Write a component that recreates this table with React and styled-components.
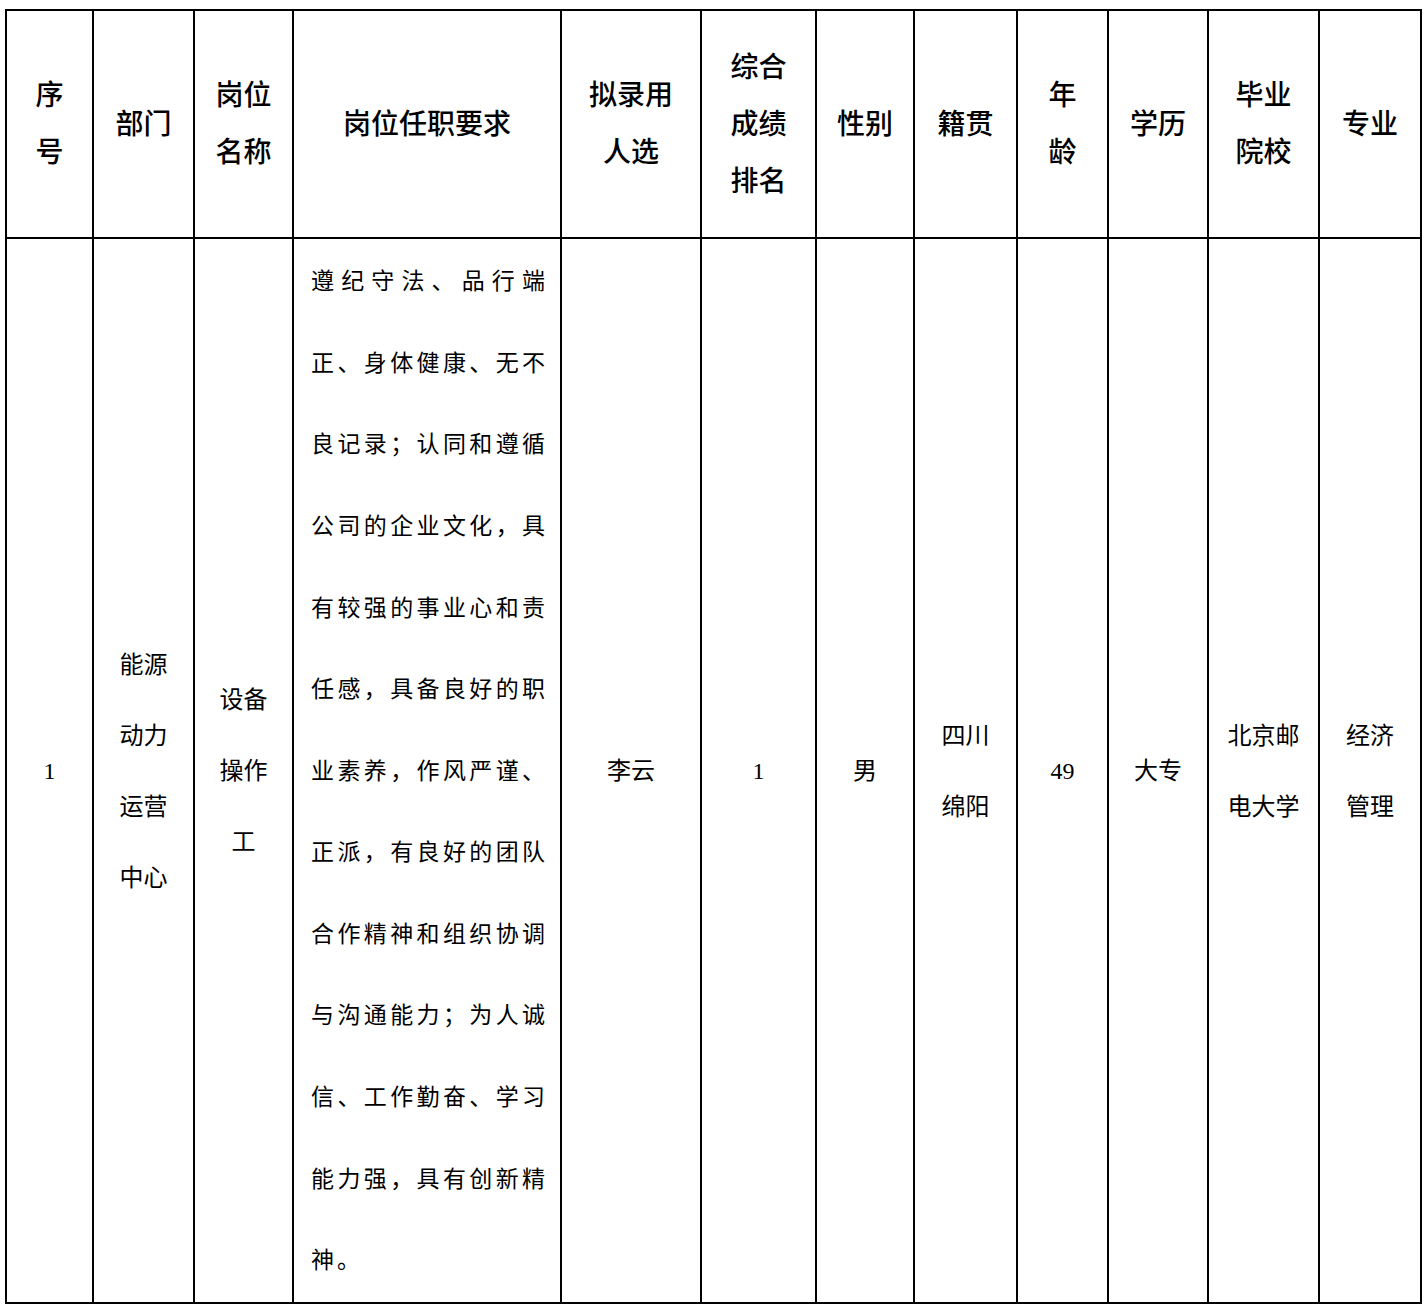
import React from "react";
import styled, { createGlobalStyle } from "styled-components";

const Global = createGlobalStyle`
  *, *::before, *::after { box-sizing: border-box; }
  html, body { margin: 0; padding: 0; background: #ffffff; }
  body {
    font-family: "Liberation Serif", "Noto Sans CJK SC", serif;
    color: #000000;
  }
`;

const Table = styled.table`
  margin: 9px 0 0 5px;
  border-collapse: separate;
  border-spacing: 0;
  table-layout: fixed;
  width: 1417px;
  border-top: 2px solid #000;
  border-left: 2px solid #000;
`;

const HeadCell = styled.th`
  width: ${(p) => p.$w}px;
  height: 228px;
  padding: 0;
  border-right: 2px solid #000;
  border-bottom: 2px solid #000;
  text-align: center;
  vertical-align: middle;
  font-size: 28px;
  font-weight: 500;
  line-height: 57px;
`;

const BodyCell = styled.td`
  height: 1065px;
  padding: 2px 0 0;
  border-right: 2px solid #000;
  border-bottom: 2px solid #000;
  text-align: center;
  vertical-align: middle;
  font-size: 24px;
  font-weight: 400;
  line-height: 71px;
`;

const Line = styled.span`
  display: block;
  white-space: nowrap;
  color: ${(p) => p.$color || "#000"};
`;

const Requirements = styled.div`
  padding: 0 15px 0 17px;
  text-align: left;
  font-size: 23px;
  line-height: 81.6px;
`;

const ReqLine = styled.span`
  display: block;
  white-space: nowrap;
  text-align: ${(p) => (p.$last ? "left" : "justify")};
  text-align-last: ${(p) => (p.$last ? "left" : "justify")};
  letter-spacing: ${(p) => (p.$last ? "3px" : "0")};
`;

const columns = [
  { w: 87, head: ["序", "号"] },
  { w: 101, head: ["部门"] },
  { w: 99, head: ["岗位", "名称"] },
  { w: 268, head: ["岗位任职要求"] },
  { w: 140, head: ["拟录用", "人选"] },
  { w: 115, head: ["综合", "成绩", "排名"] },
  { w: 98, head: ["性别"] },
  { w: 103, head: ["籍贯"] },
  { w: 91, head: ["年", "龄"] },
  { w: 100, head: ["学历"] },
  { w: 111, head: ["毕业", "院校"] },
  { w: 102, head: ["专业"] },
];

const requirementLines = [
  "遵纪守法、品行端",
  "正、身体健康、无不",
  "良记录；认同和遵循",
  "公司的企业文化，具",
  "有较强的事业心和责",
  "任感，具备良好的职",
  "业素养，作风严谨、",
  "正派，有良好的团队",
  "合作精神和组织协调",
  "与沟通能力；为人诚",
  "信、工作勤奋、学习",
  "能力强，具有创新精",
  "神。",
];

const Lines = ({ items }) =>
  items.map((t, i) => <Line key={i}>{t}</Line>);

export default function App() {
  return (
    <>
      <Global />
      <Table>
        <thead>
          <tr>
            {columns.map((c, i) => (
              <HeadCell key={i} $w={c.w}>
                <Lines items={c.head} />
              </HeadCell>
            ))}
          </tr>
        </thead>
        <tbody>
          <tr>
            <BodyCell>1</BodyCell>
            <BodyCell>
              <Lines items={["能源", "动力", "运营", "中心"]} />
            </BodyCell>
            <BodyCell>
              <Lines items={["设备", "操作", "工"]} />
            </BodyCell>
            <BodyCell>
              <Requirements>
                {requirementLines.map((t, i) => (
                  <ReqLine key={i} $last={i === requirementLines.length - 1}>
                    {t}
                  </ReqLine>
                ))}
              </Requirements>
            </BodyCell>
            <BodyCell>李云</BodyCell>
            <BodyCell>1</BodyCell>
            <BodyCell>男</BodyCell>
            <BodyCell>
              <Lines items={["四川", "绵阳"]} />
            </BodyCell>
            <BodyCell>49</BodyCell>
            <BodyCell>大专</BodyCell>
            <BodyCell>
              <Lines items={["北京邮", "电大学"]} />
            </BodyCell>
            <BodyCell>
              <Lines items={["经济", "管理"]} />
            </BodyCell>
          </tr>
        </tbody>
      </Table>
    </>
  );
}
